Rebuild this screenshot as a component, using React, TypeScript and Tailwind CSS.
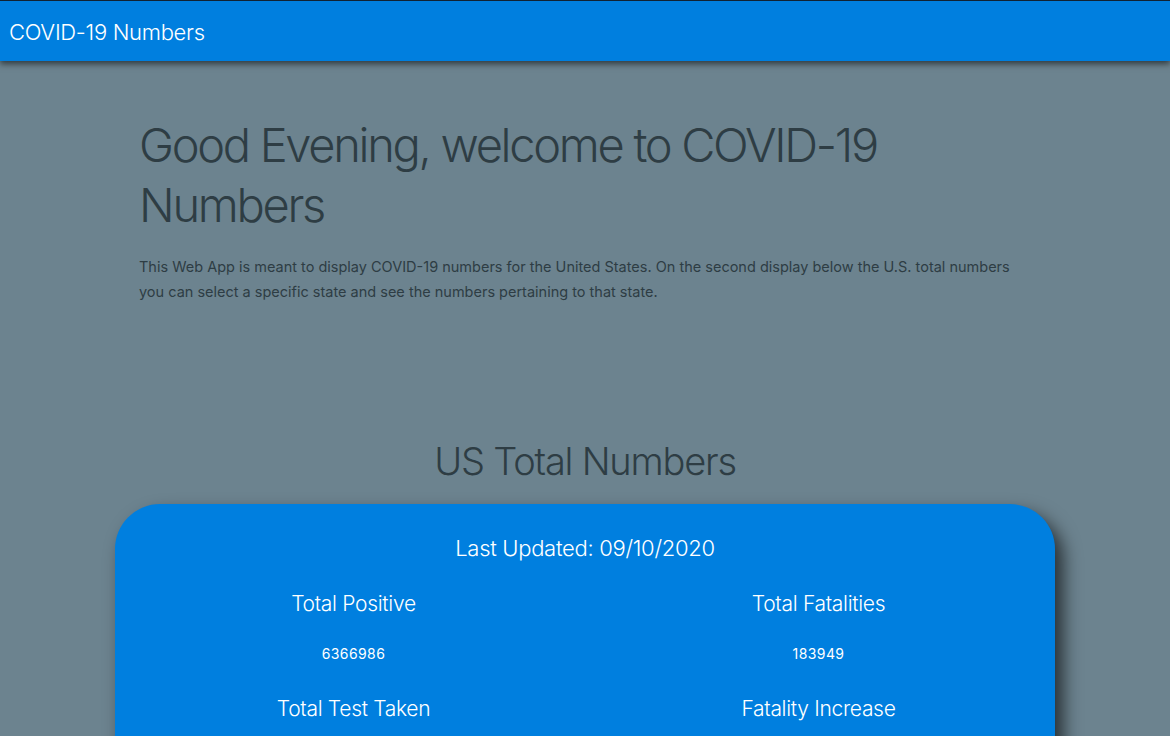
import React from 'react';

const stats = [
  { label: 'Total Positive', value: '6366986' },
  { label: 'Total Fatalities', value: '183949' },
  { label: 'Total Test Taken', value: '89564921' },
  { label: 'Fatality Increase', value: '1208' },
];

export default function App() {
  return (
    <div className="min-h-screen bg-[#6c838f] font-['Inter',sans-serif] overflow-hidden">
      <nav className="h-[61px] bg-[#007fdf] border-t border-[#123] shadow-[0_3px_6px_rgba(0,0,0,0.55)] flex items-center px-[9px] pt-[3px] relative z-10">
        <span className="text-white text-[22px] font-light tracking-[-0.3px]">COVID-19 Numbers</span>
      </nav>

      <div className="max-w-[892px] mx-auto pt-[54px]">
        <h1 className="text-[47px] leading-[60px] font-light text-[#2e3d44] tracking-[-2.3px]">
          Good Evening, welcome to COVID-19 Numbers
        </h1>
        <p className="mt-[19px] text-[14.5px] leading-[25px] text-[#2e3d44]">
          This Web App is meant to display COVID-19 numbers for the United States. On the second display below the U.S. total numbers
          you can select a specific state and see the numbers pertaining to that state.
        </p>
      </div>

      <h2 className="mt-[132px] text-center text-[38px] leading-[50px] font-light text-[#2e3d44] tracking-[-1.2px]">
        US Total Numbers
      </h2>

      <div className="mt-[18px] mx-auto w-[940px] bg-[#007fdf] rounded-[45px] shadow-[8px_10px_18px_rgba(0,0,0,0.65)] pt-[29px] pb-10 text-white">
        <div className="text-center text-[22px] font-light leading-[30px] tracking-[-0.3px]">Last Updated: 09/10/2020</div>
        <div className="grid grid-cols-2 mt-[26px] gap-y-[30px] pl-[6px] pr-[4px]">
          {stats.map((s) => (
            <div key={s.label} className="flex flex-col items-center">
              <div className="text-[21px] font-light leading-[30px] tracking-[-0.3px]">{s.label}</div>
              <div className="mt-[25px] text-[14px] leading-[20px] tracking-[0.4px]">{s.value}</div>
            </div>
          ))}
        </div>
      </div>
    </div>
  );
}
